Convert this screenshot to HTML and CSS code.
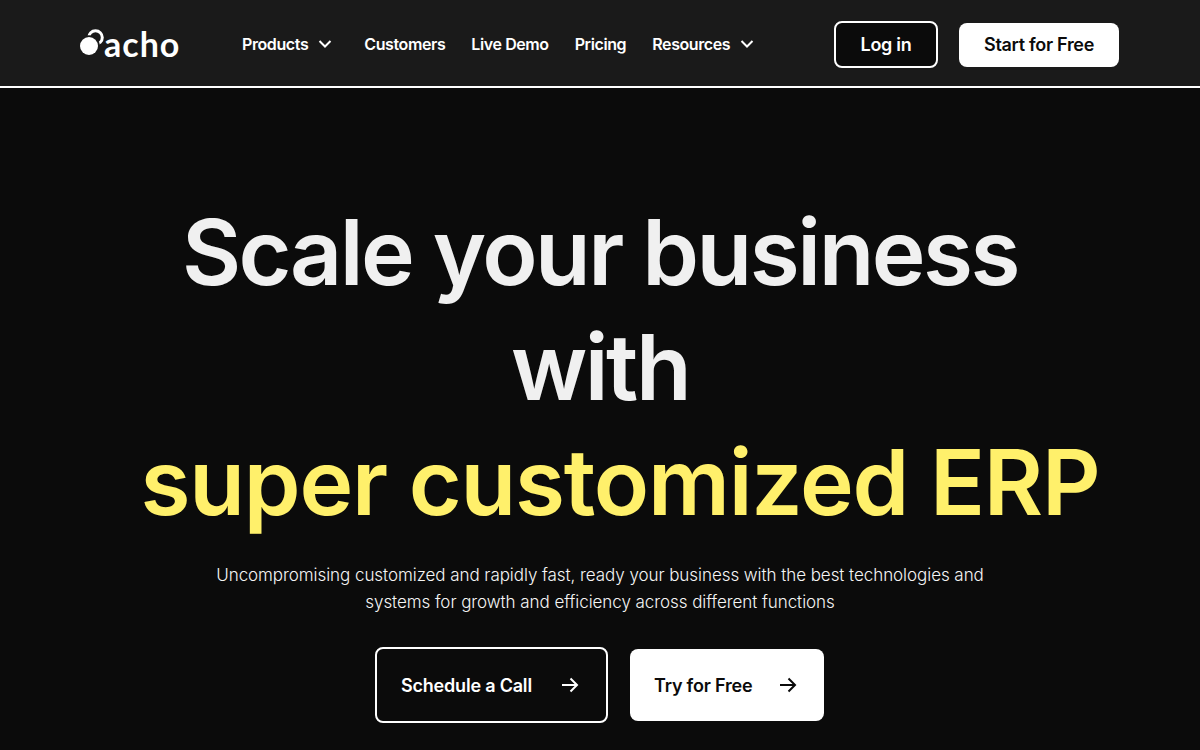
FILE: index.html
```html
<!DOCTYPE html>
<html lang="en">
<head>
  <meta charset="UTF-8">
  <title>Acho</title>
  <link rel="stylesheet" href="styles.css">
</head>
<body>
  <header class="navbar">
    <a class="logo" href="#">
      <svg class="logo-mark" viewBox="0 0 26 26" width="26" height="26">
        <circle cx="15.500" cy="8.500" r="6.800" fill="none" stroke="#fff" stroke-width="3"/>
        <circle cx="9" cy="17" r="10.800" fill="#1a1a1a"/>
        <circle cx="9" cy="17" r="9" fill="#fff"/>
      </svg>
      <span class="logo-text">acho</span>
    </a>
    <nav class="nav-links">
      <a class="nav-link has-menu" href="#">Products
        <svg class="chevron" viewBox="0 0 14 8" width="14" height="8"><path d="M1.500 1 7 6.500 12.500 1" fill="none" stroke="#fff" stroke-width="2"/></svg>
      </a>
      <a class="nav-link" href="#">Customers</a>
      <a class="nav-link" href="#">Live Demo</a>
      <a class="nav-link" href="#">Pricing</a>
      <a class="nav-link has-menu" href="#">Resources
        <svg class="chevron" viewBox="0 0 14 8" width="14" height="8"><path d="M1.500 1 7 6.500 12.500 1" fill="none" stroke="#fff" stroke-width="2"/></svg>
      </a>
    </nav>
    <div class="nav-actions">
      <a class="btn btn-login" href="#">Log in</a>
      <a class="btn btn-start" href="#">Start for Free</a>
    </div>
  </header>

  <main class="hero">
    <h1 class="hero-title">Scale your business<br>with<br><span class="highlight">super customized ERP</span></h1>
    <p class="hero-text">Uncompromising customized and rapidly fast, ready your business with the best technologies and<br>systems for growth and efficiency across different functions</p>
    <div class="hero-actions">
      <a class="cta cta-dark" href="#">Schedule a Call
        <svg viewBox="0 0 18 16" width="18" height="16"><path d="M1 8h15M9.500 1.500 16 8l-6.500 6.500" fill="none" stroke="#fff" stroke-width="2"/></svg>
      </a>
      <a class="cta cta-light" href="#">Try for Free
        <svg viewBox="0 0 18 16" width="18" height="16"><path d="M1 8h15M9.500 1.500 16 8l-6.500 6.500" fill="none" stroke="#0a0a0a" stroke-width="2"/></svg>
      </a>
    </div>
  </main>
</body>
</html>
```

FILE: styles.css
```css
* {
  margin: 0;
  padding: 0;
  box-sizing: border-box;
}

html, body {
  height: 100%;
  background-color: #0b0b0b;
  font-family: "Inter", "Noto Sans", sans-serif;
  color: #fff;
  overflow: hidden;
}

a {
  color: inherit;
  text-decoration: none;
}

.navbar {
  display: flex;
  align-items: center;
  height: 88px;
  padding: 3px 81px 0 80px;
  background-color: #1a1a1a;
  border-bottom: 2px solid #fff;
}

.logo {
  display: flex;
  align-items: flex-end;
  width: 162px;
  margin-top: -2px;
}

.logo-mark {
  margin-bottom: 9px;
}

.logo-text {
  margin-left: -2px;
  font-family: "Lato", sans-serif;
  font-size: 34px;
  font-weight: 700;
  line-height: 40px;
  letter-spacing: 1px;
}

.nav-links {
  display: flex;
  align-items: center;
  gap: 26px;
  margin-top: -2px;
  font-size: 16px;
  font-weight: 600;
  letter-spacing: -0.4px;
}

.nav-link {
  display: flex;
  align-items: center;
  gap: 10px;
}

.has-menu {
  margin-right: 6px;
}

.nav-actions {
  display: flex;
  align-items: center;
  gap: 21px;
  margin-left: auto;
  font-size: 18px;
  font-weight: 600;
  letter-spacing: -0.3px;
}

.btn {
  display: flex;
  align-items: center;
  justify-content: center;
  border-radius: 8px;
}

.btn-login {
  width: 104px;
  height: 47px;
  background-color: #0b0b0b;
  border: 2px solid #fff;
}

.btn-start {
  width: 160px;
  height: 44px;
  background-color: #fff;
  color: #0b0b0b;
}

.hero {
  display: flex;
  flex-direction: column;
  align-items: center;
  padding-top: 107px;
}

.hero-title {
  font-size: 91px;
  line-height: 115px;
  font-weight: 600;
  letter-spacing: -2.5px;
  text-align: center;
  color: #f0f0f0;
  white-space: nowrap;
}

.highlight {
  padding-left: 40px;
  letter-spacing: -1.2px;
  color: #fff06b;
}

.hero-text {
  margin-top: 22px;
  font-size: 17px;
  font-weight: 300;
  line-height: 27px;
  letter-spacing: -0.06px;
  text-align: center;
  color: #f5f5f5;
}

.hero-actions {
  display: flex;
  gap: 22px;
  margin-top: 31px;
  padding-right: 1px;
}

.cta {
  display: flex;
  align-items: center;
  justify-content: space-between;
  height: 72px;
  padding: 0 27px 0 24px;
  font-size: 18px;
  font-weight: 600;
  letter-spacing: -0.2px;
  border-radius: 8px;
}

.cta-dark {
  width: 233px;
  height: 76px;
  border: 2px solid #fff;
}

.cta-light {
  width: 194px;
  margin-top: 2px;
  background-color: #fff;
  color: #0b0b0b;
}
```
